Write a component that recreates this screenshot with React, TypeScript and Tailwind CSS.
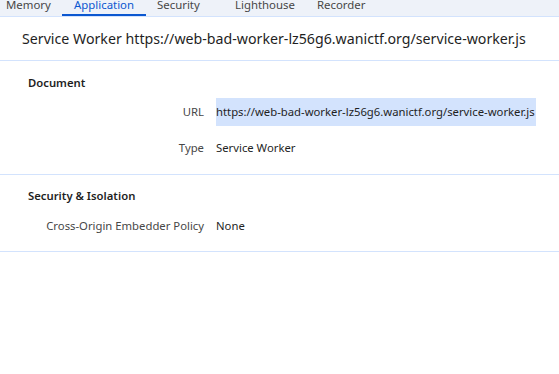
export default function App() {
  const font = { fontFamily: '"Segoe UI", "Noto Sans", sans-serif' };
  return (
    <div className="w-[559px] h-[374px] bg-white overflow-hidden text-[#1f1f1f]" style={font}>
      <div className="h-[17px] bg-[#eef2f9] border-b border-[#d3e3fd] flex items-end text-[11.4px] text-[#474747] leading-none">
        <div className="relative flex h-[16px]">
          <div className="pl-[6px] w-[62px] -mt-[1px]">Memory</div>
          <div className="relative w-[84px] pl-[12px] text-[#0b57d0] -mt-[1px]">
            Application
            <div className="absolute left-0 right-0 bottom-0 h-[2px] bg-[#0b57d0]" />
          </div>
          <div className="pl-[11px] w-[89px] -mt-[1px]">Security</div>
          <div className="w-[82px] -mt-[1px]">Lighthouse</div>
          <div className="-mt-[1px]">Recorder</div>
        </div>
      </div>
      <div className="h-[44px] border-b border-[#d3e3fd] flex items-center pl-[22px] text-[14.2px] whitespace-nowrap">
        Service Worker https://web-bad-worker-lz56g6.wanictf.org/service-worker.js
      </div>
      <div className="border-b border-[#d3e3fd] pb-[4px] text-[11.3px]">
        <div className="pl-[28px] pt-[14px] font-semibold h-[37px] leading-[16px]">Document</div>
        <div className="flex items-center h-[28px]">
          <div className="w-[204px] text-right text-[#474747]">URL</div>
          <div className="ml-[12px] bg-[#d3e3fd] h-[28px] flex items-center pr-[1px] whitespace-nowrap">https://web-bad-worker-lz56g6.wanictf.org/service-worker.js</div>
        </div>
        <div className="flex items-center h-[44px]">
          <div className="w-[204px] text-right text-[#474747]">Type</div>
          <div className="ml-[12px]">Service Worker</div>
        </div>
      </div>
      <div className="border-b border-[#d3e3fd] pb-[10px] text-[11.3px]">
        <div className="pl-[28px] pt-[13px] font-semibold h-[36px] leading-[16px]">Security &amp; Isolation</div>
        <div className="flex items-center h-[30px]">
          <div className="w-[204px] text-right text-[#474747]">Cross-Origin Embedder Policy</div>
          <div className="ml-[12px]">None</div>
        </div>
      </div>
    </div>
  );
}
